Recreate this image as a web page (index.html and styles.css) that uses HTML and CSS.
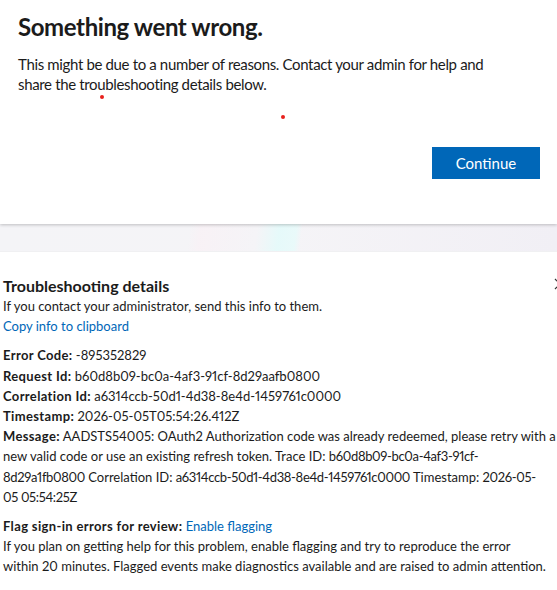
FILE: index.html
```html
<!DOCTYPE html>
<html lang="en">
<head>
<meta charset="utf-8">
<title>Something went wrong</title>
<link rel="stylesheet" href="styles.css">
</head>
<body>
<main class="page">
  <section class="card">
    <h1 class="title">Something went wrong.</h1>
    <p class="lead">This might be due to a number of reasons. Contact your admin for help and share the troubleshooting details below.</p>
    <div class="actions">
      <button class="btn-primary" type="button">Continue</button>
    </div>
  </section>
  <div class="band"></div>
  <section class="details">
    <button class="close" type="button" aria-label="Close">
      <svg width="12" height="12" viewBox="0 0 12 12"><path d="M1 1L11 11M11 1L1 11" stroke="#333" stroke-width="1.2" fill="none"/></svg>
    </button>
    <h2 class="details-title">Troubleshooting details</h2>
    <p class="line">If you contact your administrator, send this info to them.</p>
    <p class="line"><a class="link" href="#">Copy info to clipboard</a></p>
    <div class="info">
      <p class="line"><b>Error Code:</b> -895352829</p>
      <p class="line"><b>Request Id:</b> b60d8b09-bc0a-4af3-91cf-8d29aafb0800</p>
      <p class="line"><b>Correlation Id:</b> a6314ccb-50d1-4d38-8e4d-1459761c0000</p>
      <p class="line"><b>Timestamp:</b> 2026-05-05T05:54:26.412Z</p>
      <p class="line"><b>Message:</b> AADSTS54005: OAuth2 Authorization code was already redeemed, please retry with a<br>new valid code or use an existing refresh token. Trace ID: <span class="id">b60d8b09-bc0a-4af3-91cf-</span><br><span class="id">8d29a1fb0800</span> Correlation ID: <span class="id">a6314ccb-50d1-4d38-8e4d-1459761c0000</span> Timestamp: <span class="id">2026-05-</span><br><span class="id">05 05:54:25Z</span></p>
    </div>
    <div class="flag">
      <p class="line"><b>Flag sign-in errors for review:</b> <a class="link" href="#">Enable flagging</a></p>
      <p class="line">If you plan on getting help for this problem, enable flagging and try to reproduce the error<br>within 20 minutes. Flagged events make diagnostics available and are raised to admin attention.</p>
    </div>
  </section>
  <span class="dot dot-a"></span>
  <span class="dot dot-b"></span>
</main>
</body>
</html>
```
FILE: styles.css
```css
* { box-sizing: border-box; }
html, body { margin: 0; padding: 0; background: #fff; }
body {
  font-family: "Segoe UI", Lato, "Noto Sans", sans-serif;
  font-variant-numeric: proportional-nums;
  color: #1b1b1b;
  width: 557px;
  height: 590px;
  overflow: hidden;
}
.page { position: relative; }
.card {
  background: #fff;
  padding: 11px 17px 0 18px;
  height: 224px;
  position: relative;
  z-index: 1;
  box-shadow: 0 1px 3px rgba(0,0,0,0.22);
}
.title {
  margin: 0;
  font-size: 24px;
  font-weight: 700;
  line-height: 32px;
  letter-spacing: -0.4px;
}
.lead {
  margin: 11px 0 0;
  max-width: 500px;
  font-size: 15px;
  line-height: 20px;
  letter-spacing: -0.35px;
}
.actions {
  display: flex;
  justify-content: flex-end;
  margin-top: 53px;
}
.btn-primary {
  width: 108px;
  height: 32px;
  border: none;
  background: #0067b8;
  color: #fff;
  font-family: inherit;
  font-size: 15px;
  padding: 0;
}
.band {
  height: 28px;
  background:
    linear-gradient(98deg, transparent 34%, rgba(250,240,245,0.6) 36%, rgba(244,244,247,0.2) 46%, rgba(228,250,250,0.9) 50%, rgba(232,250,250,0.9) 53%, transparent 54%),
    linear-gradient(90deg, #f4f4f7 0%, #f5f4f7 50%, #f1eff5 100%);
  border-bottom: 1px solid #f0f0f2;
}
.details {
  position: relative;
  padding: 24px 0 0 3px;
  font-size: 13px;
  line-height: 20.2px;
}
.details-title {
  margin: 0;
  font-size: 16px;
  font-weight: 700;
  line-height: 20px;
}
.line { margin: 0; white-space: nowrap; }
.line b { font-weight: 700; letter-spacing: 0.35px; }
.id { letter-spacing: -0.35px; }
.link { color: #0067b8; text-decoration: none; }
.info { margin-top: 9px; }
.flag { margin-top: 9px; }
.close {
  position: absolute;
  right: -10px;
  top: 26px;
  width: 14px;
  height: 14px;
  padding: 0;
  border: none;
  background: none;
}
.dot {
  position: absolute;
  width: 4px;
  height: 4px;
  border-radius: 50%;
  background: #e8201c;
  z-index: 2;
}
.dot-a { left: 100px; top: 95px; }
.dot-b { left: 281px; top: 115px; }
```
